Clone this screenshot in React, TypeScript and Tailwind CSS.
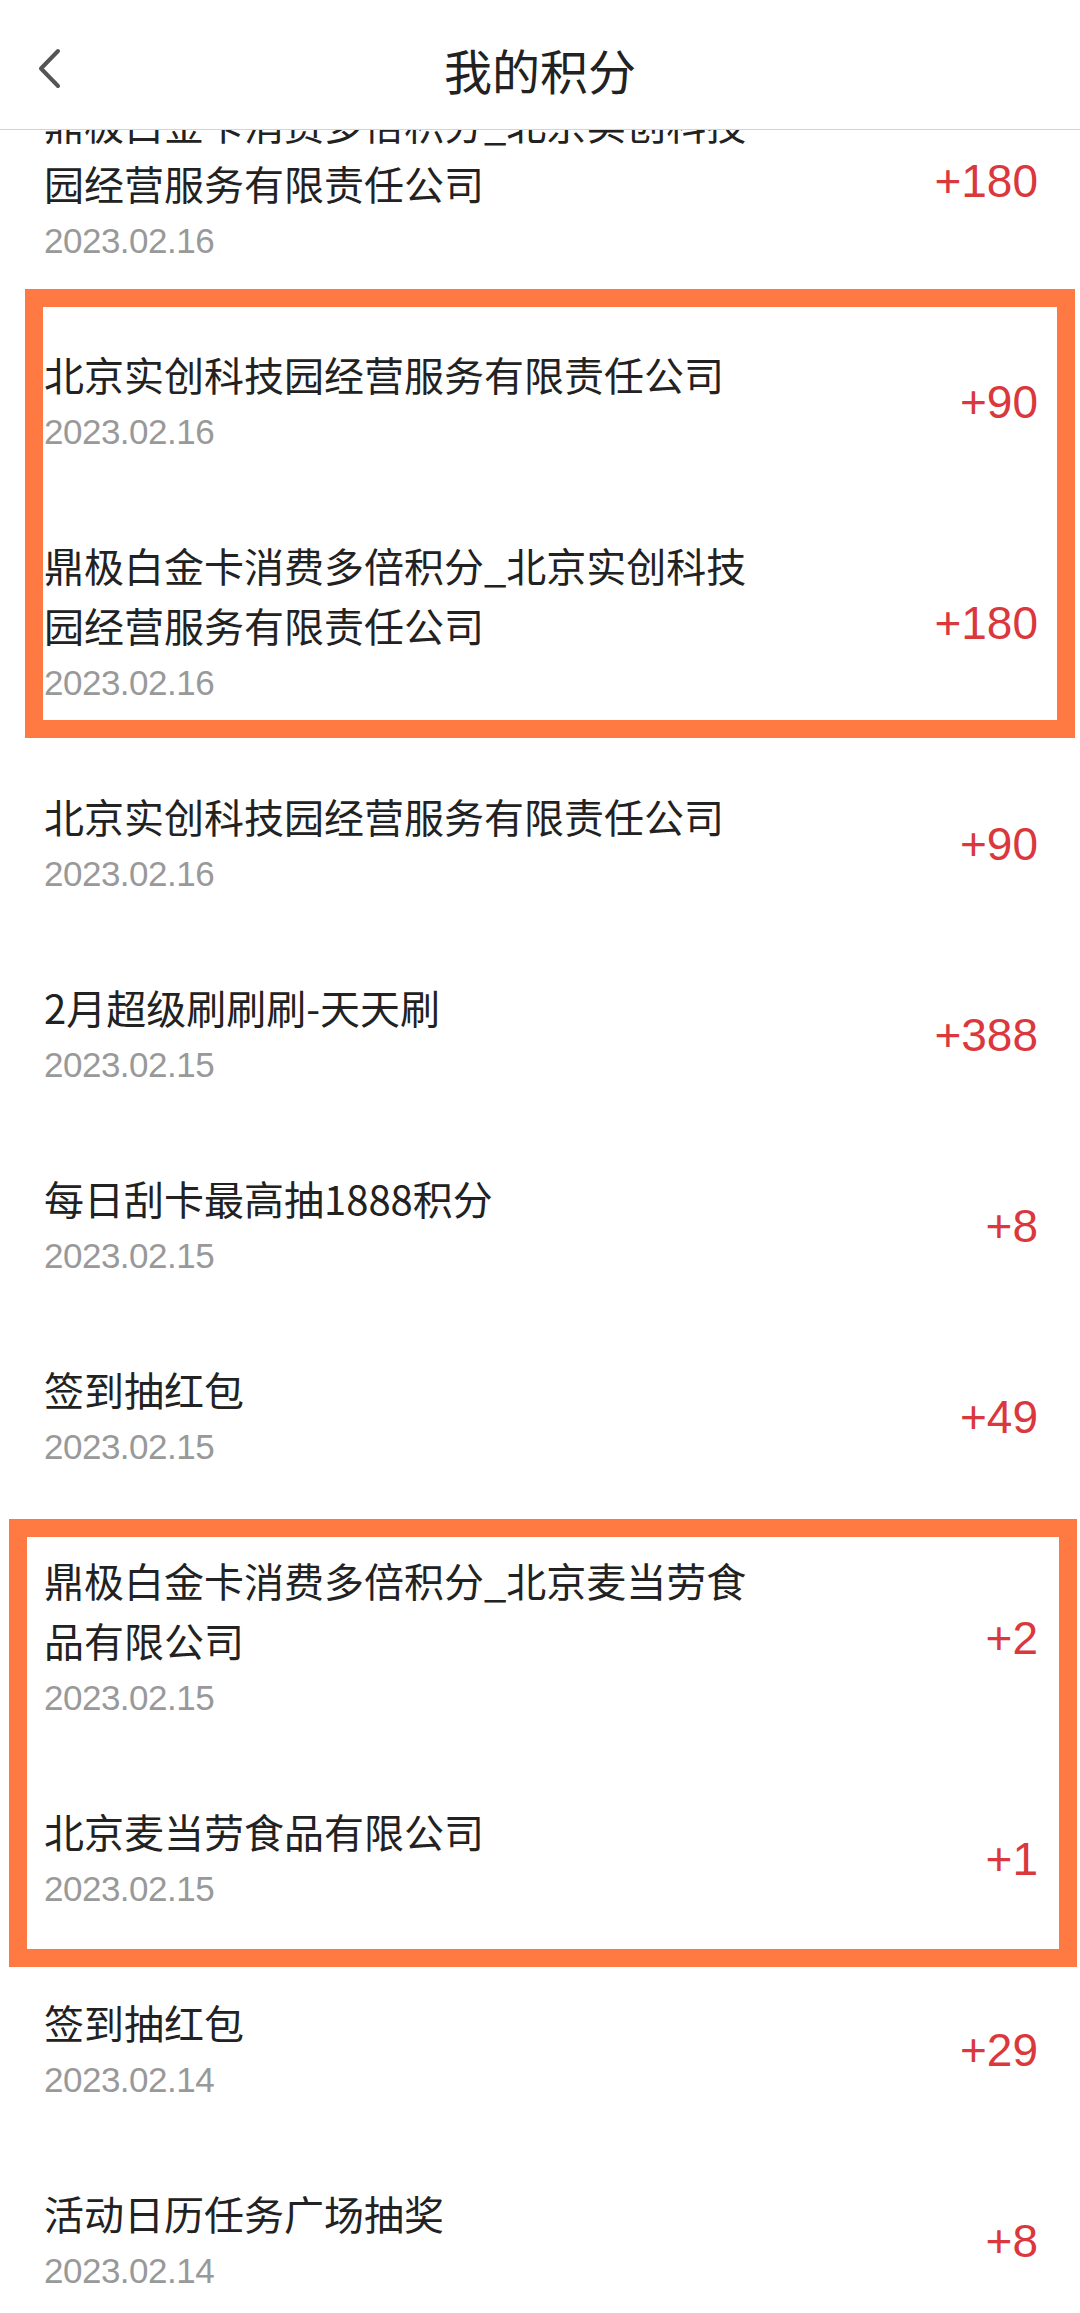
import React from "react";

type Record = { title: string; date: string; amount: string };

const records: Record[] = [
  { title: "鼎极白金卡消费多倍积分_北京实创科技园经营服务有限责任公司", date: "2023.02.16", amount: "+180" },
  { title: "北京实创科技园经营服务有限责任公司", date: "2023.02.16", amount: "+90" },
  { title: "鼎极白金卡消费多倍积分_北京实创科技园经营服务有限责任公司", date: "2023.02.16", amount: "+180" },
  { title: "北京实创科技园经营服务有限责任公司", date: "2023.02.16", amount: "+90" },
  { title: "2月超级刷刷刷-天天刷", date: "2023.02.15", amount: "+388" },
  { title: "每日刮卡最高抽1888积分", date: "2023.02.15", amount: "+8" },
  { title: "签到抽红包", date: "2023.02.15", amount: "+49" },
  { title: "鼎极白金卡消费多倍积分_北京麦当劳食品有限公司", date: "2023.02.15", amount: "+2" },
  { title: "北京麦当劳食品有限公司", date: "2023.02.15", amount: "+1" },
  { title: "签到抽红包", date: "2023.02.14", amount: "+29" },
  { title: "活动日历任务广场抽奖", date: "2023.02.14", amount: "+8" },
];

const cjk = { fontFamily: '"Noto Sans CJK SC", "Noto Sans", sans-serif' };
const latin = { fontFamily: '"Liberation Sans", Arial, sans-serif' };

function RecordRow({ title, date, amount }: Record) {
  return (
    <div className="flex items-center justify-between pl-[44px] pr-[42px] pt-[37px] pb-[38px]">
      <div className="w-[720px]">
        <p className="text-[40px] leading-[60px] text-[#222222]" style={cjk}>
          {title}
        </p>
        <p className="text-[35px] leading-[56px] tracking-[-0.5px] text-[#999999]" style={latin}>
          {date}
        </p>
      </div>
      <span className="text-[46px] leading-[56px] text-[#da383d]" style={latin}>
        {amount}
      </span>
    </div>
  );
}

export default function App() {
  return (
    <div className="relative h-[2313px] w-[1080px] overflow-hidden bg-white">
      <header className="grid h-[130px] grid-cols-[1fr_auto_1fr] items-center border-b border-[#d4d4d4] bg-white pt-[8px]">
        <div className="pl-[38px]">
          <svg width="24" height="42" viewBox="0 0 24 42" fill="none" className="block">
            <polyline
              points="20,3 3,20.5 20,38"
              stroke="#555555"
              strokeWidth="4"
              strokeLinecap="round"
              strokeLinejoin="round"
            />
          </svg>
        </div>
        <h1 className="text-[48px] leading-[60px] text-[#222222]" style={cjk}>
          我的积分
        </h1>
        <div />
      </header>

      <div className="h-[2183px] overflow-hidden">
        <div className="-mt-[74px]">
          {records.map((r, i) => (
            <RecordRow key={i} {...r} />
          ))}
        </div>
      </div>

      {/* annotation frames drawn over the list */}
      <div className="absolute left-[25px] top-[289px] h-[449px] w-[1050px] border-[18px] border-[#ff7a42]" />
      <div className="absolute left-[9px] top-[1519px] h-[448px] w-[1068px] border-[18px] border-[#ff7a42]" />
    </div>
  );
}
